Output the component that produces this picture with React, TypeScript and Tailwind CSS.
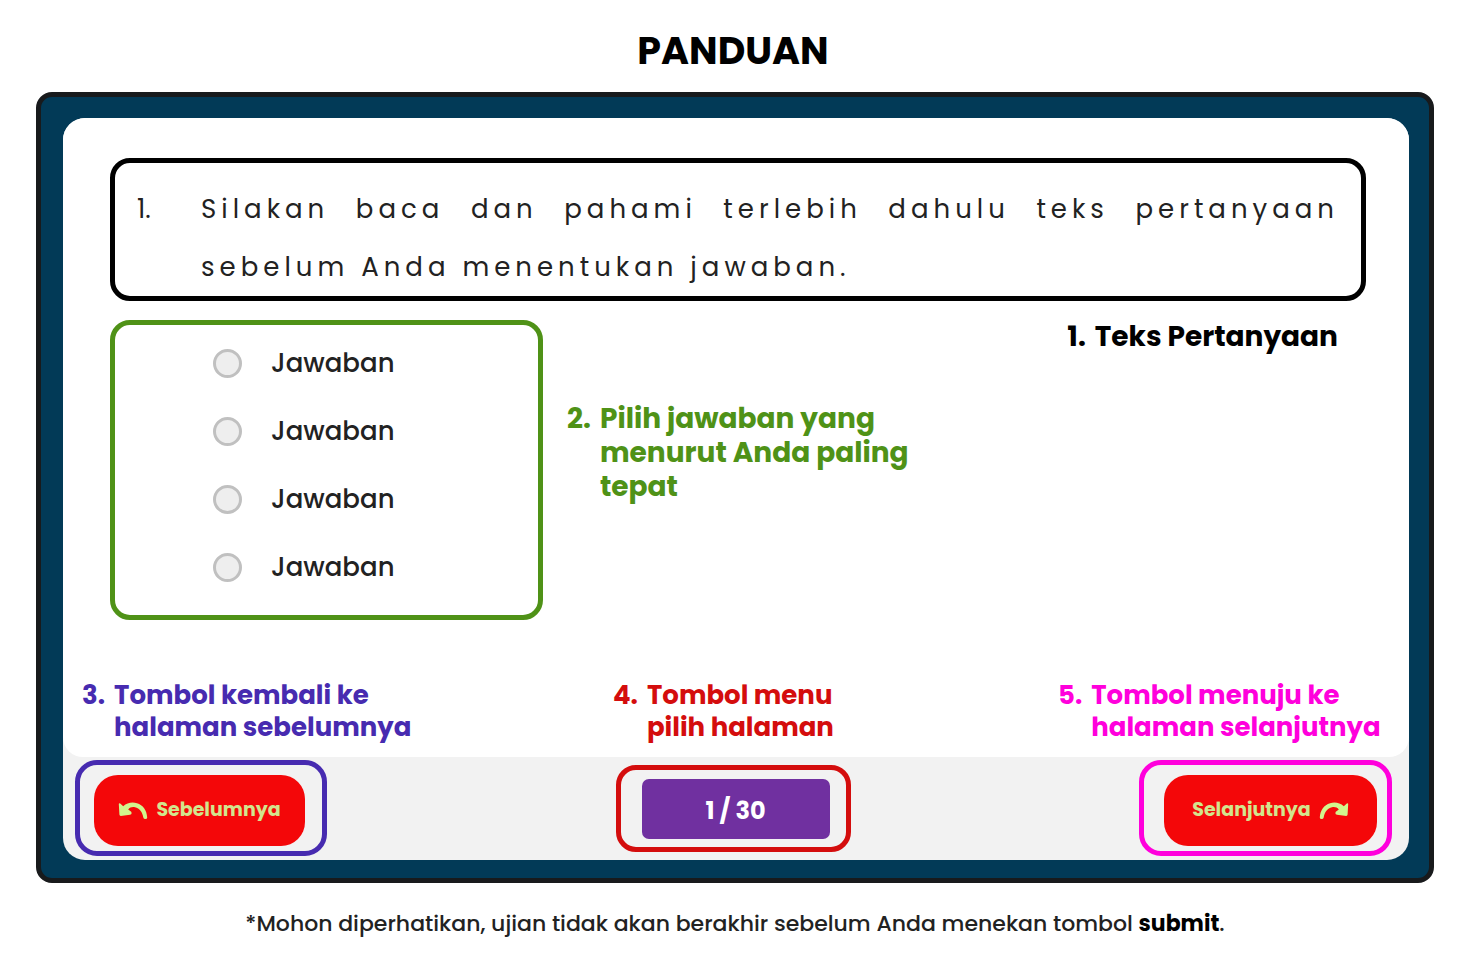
import React from "react";

type NoteProps = { number: number; className: string; children: React.ReactNode };

function Note({ number, className, children }: NoteProps) {
  return (
    <div className={`flex gap-[9px] font-bold ${className}`}>
      <span className="shrink-0">{number}.</span>
      <p>{children}</p>
    </div>
  );
}

function BackArrow({ className = "" }: { className?: string }) {
  return (
    <svg viewBox="0 0 30 18" className={`h-[18px] w-[30px] shrink-0 ${className}`} aria-hidden="true">
      <path d="M0.8 2 Q1 0.8 2.2 1.6 L5.2 4.2 C9 0.8 14 -0.2 19 1.2 C25 3 28.7 8 29.2 15.2 Q29.3 17 27.4 17 Q25.6 17 25.3 15.4 C24.4 10 21.5 6.2 17 5.2 C14 4.6 12 5.4 10.2 7.4 L13.2 9.8 Q14.4 12.2 12 12.7 L2.8 14 Q1.5 14 1.4 12.6 Z" fill="#d2f58d" />
    </svg>
  );
}

const answers = ["Jawaban", "Jawaban", "Jawaban", "Jawaban"];

export default function App() {
  return (
    <main className="flex min-h-screen flex-col bg-white pt-6 pr-10 pl-9 font-['Poppins','Inter',sans-serif] text-black">
      <h1 className="pr-1 text-center text-[38px] leading-[54px] font-bold">PANDUAN</h1>

      <section className="mt-[14px] rounded-[16px] border-[5px] border-[#181a1c] bg-[#023a57] pt-[21px] pr-5 pb-[18px] pl-[22px]">
        <div className="overflow-hidden rounded-[22px] bg-[#f2f2f2]">
          <div className="rounded-b-[20px] bg-white pt-10 pb-[14px]">
            <div className="mr-[43px] ml-[47px] flex rounded-[20px] border-[5px] border-black px-[22px] pt-[17px] text-[26px] leading-[58px] text-[#222]">
              <span className="w-16 shrink-0">1.</span>
              <p className="flex-1 text-justify tracking-[5px]">
                Silakan baca dan pahami terlebih dahulu teks pertanyaan sebelum Anda menentukan jawaban.
              </p>
            </div>

            <div className="mt-[19px] mr-[71px] ml-[47px] flex items-start text-[28px]">
              <div
                role="radiogroup"
                aria-label="Jawaban"
                className="flex w-[433px] flex-col gap-[39px] rounded-[20px] border-[5px] border-[#4f9217] pt-6 pb-[33px] pl-[98px]"
              >
                {answers.map((answer, index) => (
                  <label key={index} className="flex items-center gap-[29px] text-[26px] leading-[29px] font-medium text-[#222]">
                    <input
                      type="radio"
                      name="jawaban"
                      className="size-[29px] appearance-none rounded-full border-[3px] border-[#c0c0c0] bg-[#eeeeee] checked:bg-[#4f9217]"
                    />
                    {answer}
                  </label>
                ))}
              </div>
              <Note number={2} className="mt-[82px] ml-6 w-[370px] leading-[34px] text-[#4f9217]">
                Pilih jawaban yang menurut Anda paling tepat
              </Note>
              <Note number={1} className="ml-auto leading-[34px] whitespace-nowrap">
                Teks Pertanyaan
              </Note>
            </div>

            <div className="mt-[59px] flex justify-between pr-[17px] pl-[19px] text-[26px] leading-[32px]">
              <Note number={3} className="w-[340px] text-[#472bb0]">
                Tombol kembali ke
                <br />
                halaman sebelumnya
              </Note>
              <Note number={4} className="w-[254px] text-[#d40d0d]">
                Tombol menu
                <br />
                pilih halaman
              </Note>
              <Note number={5} className="w-[334px] text-[#ff00dc]">
                Tombol menuju ke
                <br />
                halaman selanjutnya
              </Note>
            </div>
          </div>

          <nav className="flex items-center justify-between pt-[3px] pr-[17px] pb-1 pl-3">
            <div className="rounded-[22px] border-[5px] border-[#472bb0] pt-[10px] pr-[17px] pb-[5px] pl-[14px]">
              <button type="button" className="flex h-[71px] w-[211px] items-center justify-center gap-2 rounded-[24px] bg-[#f40709] text-[19px] font-bold text-[#d2e58d]">
                <BackArrow />
                Sebelumnya
              </button>
            </div>
            <div className="rounded-[20px] border-[5px] border-[#d40d0d] pt-[9px] pr-4 pb-2 pl-[21px]">
              <button type="button" className="h-[60px] w-[188px] rounded-[7px] bg-[#7030a0] pt-1 text-[24px] font-bold text-white">
                1 / 30
              </button>
            </div>
            <div className="rounded-[22px] border-[5px] border-[#ff00dc] pt-[10px] pr-[10px] pb-[5px] pl-5">
              <button type="button" className="flex h-[71px] w-[213px] items-center justify-center gap-2 rounded-[24px] bg-[#f40709] text-[19px] font-bold text-[#d2e58d]">
                Selanjutnya
                <BackArrow className="-scale-x-100" />
              </button>
            </div>
          </nav>
        </div>
      </section>

      <p className="mt-[23px] text-center text-[22px] leading-[36px] font-medium text-[#222]">
        *Mohon diperhatikan, ujian tidak akan berakhir sebelum Anda menekan tombol <strong className="text-black">submit</strong>.
      </p>
    </main>
  );
}
